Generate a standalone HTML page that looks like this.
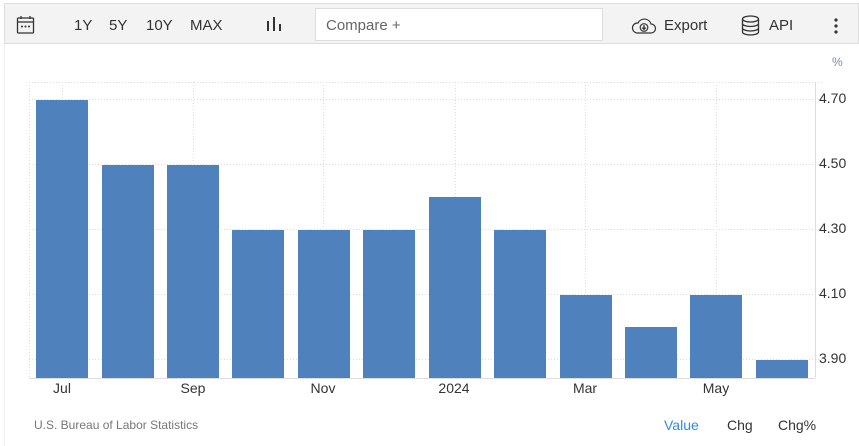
<!DOCTYPE html>
<html><head><style>
body{margin:0;width:859px;height:446px;background:#fff;font-family:"Liberation Sans",sans-serif;position:relative;overflow:hidden}
.tb{position:absolute;left:4px;top:3px;width:855px;height:41px;background:#f3f3f3;border:1px solid #ddd;box-sizing:border-box}
.t{position:absolute;font-size:15px;color:#333;top:17px}
.cmp{position:absolute;left:315px;top:8px;width:288px;height:33px;background:#fff;border:1px solid #ddd;box-sizing:border-box;font-size:15px;color:#666;padding:8px 10px}
.s{position:absolute;font-size:14px;color:#333}
</style></head><body>
<div style="position:absolute;left:4px;top:43px;width:1px;height:403px;background:#eee"></div>
<div class="tb"></div>
<svg style="position:absolute;left:16px;top:15px" width="20" height="20" viewBox="0 0 20 20" fill="none" stroke="#333" stroke-width="1.3"><rect x="1.5" y="3" width="16" height="15" rx="1"/><line x1="1.5" y1="7" x2="17.5" y2="7"/><line x1="5" y1="1" x2="5" y2="4"/><line x1="14" y1="1" x2="14" y2="4"/><circle cx="6" cy="11.5" r=".4" fill="#333"/><circle cx="9.5" cy="11.5" r=".4" fill="#333"/><circle cx="13" cy="11.5" r=".4" fill="#333"/></svg>
<span class="t" style="left:74px">1Y</span><span class="t" style="left:109px">5Y</span><span class="t" style="left:146px">10Y</span><span class="t" style="left:190px">MAX</span>
<svg style="position:absolute;left:266px;top:16px" width="16" height="16"><rect x="1" y="5" width="2" height="10" fill="#333"/><rect x="7" y="1" width="2" height="14" fill="#333"/><rect x="13" y="8" width="2" height="7" fill="#333"/></svg>
<div class="cmp">Compare +</div>
<svg style="position:absolute;left:631px;top:17px" width="26" height="18" viewBox="0 0 26 18" fill="none" stroke="#333" stroke-width="1.2"><path d="M6 16H20a4.5 4.5 0 0 0 0-9A7 7 0 0 0 7 6 5 5 0 0 0 6 16z"/><circle cx="13" cy="10.5" r="3.8"/><path d="M13 8v4M11.3 10.6l1.7 1.8 1.7-1.8" stroke-width="1.3"/></svg>
<span class="t" style="left:664px">Export</span>
<svg style="position:absolute;left:741px;top:15px" width="19" height="21" viewBox="0 0 19 21" fill="none" stroke="#333" stroke-width="1.3"><ellipse cx="9.5" cy="4" rx="8" ry="3"/><path d="M1.5 4v13c0 1.7 3.6 3 8 3s8-1.3 8-3V4M1.5 8.5c0 1.7 3.6 3 8 3s8-1.3 8-3M1.5 13c0 1.7 3.6 3 8 3s8-1.3 8-3"/></svg>
<span class="t" style="left:769px">API</span>
<svg style="position:absolute;left:833px;top:18px" width="6" height="16"><circle cx="3" cy="2" r="1.6" fill="#333"/><circle cx="3" cy="8" r="1.6" fill="#333"/><circle cx="3" cy="14" r="1.6" fill="#333"/></svg>
<span style="position:absolute;left:832px;top:55px;font-size:12px;color:#7a8aa0">%</span>
<svg style="position:absolute;left:0;top:0" width="859" height="446">
<g stroke="#ddd" stroke-dasharray="1,2" stroke-width="1">
<line x1="29" y1="82.5" x2="823" y2="82.5"/><line x1="29" y1="99.5" x2="823" y2="99.5"/><line x1="29" y1="164.5" x2="823" y2="164.5"/><line x1="29" y1="229.5" x2="823" y2="229.5"/><line x1="29" y1="294.5" x2="823" y2="294.5"/><line x1="29" y1="359.5" x2="823" y2="359.5"/>
<line x1="29.5" y1="82" x2="29.5" y2="378"/><line x1="62.5" y1="82" x2="62.5" y2="378"/><line x1="193.5" y1="82" x2="193.5" y2="378"/><line x1="323.5" y1="82" x2="323.5" y2="378"/><line x1="455.5" y1="82" x2="455.5" y2="378"/><line x1="585.5" y1="82" x2="585.5" y2="378"/><line x1="716.5" y1="82" x2="716.5" y2="378"/>
</g>
<line x1="815.5" y1="82" x2="815.5" y2="378" stroke="#ddd"/>
<line x1="29" y1="378.5" x2="815" y2="378.5" stroke="#ddd"/>
<g fill="#4f81bd">
<rect x="36" y="100" width="52" height="278"/><rect x="102" y="165" width="52" height="213"/><rect x="167" y="165" width="52" height="213"/><rect x="232" y="230" width="52" height="148"/><rect x="298" y="230" width="52" height="148"/><rect x="363" y="230" width="52" height="148"/><rect x="429" y="197" width="52" height="181"/><rect x="494" y="230" width="52" height="148"/><rect x="560" y="295" width="52" height="83"/><rect x="625" y="327" width="52" height="51"/><rect x="690" y="295" width="52" height="83"/><rect x="756" y="360" width="52" height="18"/>
</g>
<g font-family="Liberation Sans" font-size="14" fill="#333">
<text x="819" y="103">4.70</text><text x="819" y="168">4.50</text><text x="819" y="233">4.30</text><text x="819" y="298">4.10</text><text x="819" y="363">3.90</text>
<text x="62" y="393" text-anchor="middle">Jul</text><text x="193" y="393" text-anchor="middle">Sep</text><text x="323" y="393" text-anchor="middle">Nov</text><text x="454" y="393" text-anchor="middle">2024</text><text x="585" y="393" text-anchor="middle">Mar</text><text x="716" y="393" text-anchor="middle">May</text>
</g>
</svg>
<span style="position:absolute;left:34px;top:418px;font-size:12px;color:#777">U.S. Bureau of Labor Statistics</span>
<span class="s" style="left:664px;top:417px;color:#2f8be6">Value</span>
<span class="s" style="left:727px;top:417px">Chg</span>
<span class="s" style="left:778px;top:417px">Chg%</span>
</body></html>
